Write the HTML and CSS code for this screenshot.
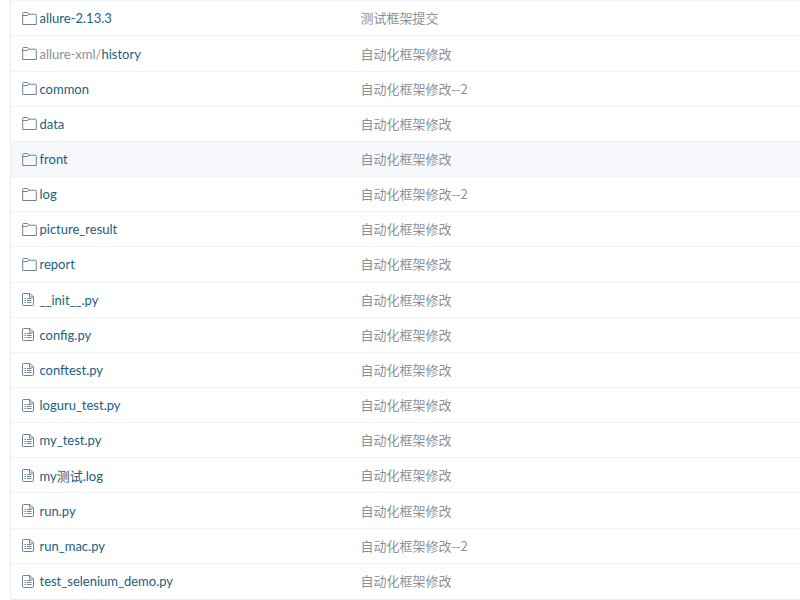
FILE: index.html
```html
<!DOCTYPE html>
<html lang="zh">
<head>
<meta charset="utf-8">
<title>Files</title>
<link rel="stylesheet" href="styles.css">
</head>
<body>
<svg class="defs" width="0" height="0" aria-hidden="true">
  <symbol id="folder" viewBox="0 0 15 13">
    <path d="M.7 12.500V1.300q0-.8.8-.8h3.700l1.800 1.700h6.300q1 0 1 1v9.300z" fill="none" stroke="#6f8296"/>
    <path d="M.7 3.500h4.800l1.500-1.300" fill="none" stroke="#6f8296"/>
  </symbol>
  <symbol id="file" viewBox="0 0 12 13">
    <path d="M1.300.5h6.400l3.800 3.300v7.900q0 .8-.8.8H1.300q-.8 0-.8-.8V1.300q0-.8.8-.8z" fill="none" stroke="#6f8296"/>
    <path d="M7.500.5v3.500h4M2.500 5.500h1.500M2.500 7.500h1.500M2.500 9.500h1.500M5 5.500h4.500M5 7.500h4.500M5 9.500h4.500" fill="none" stroke="#6f8296"/>
  </symbol>
</svg>
<main class="list">
  <div class="row"><div class="name"><svg class="ic"><use href="#folder"/></svg><a>allure-2.13.3</a></div><div class="msg">测试框架提交</div></div>
  <div class="row"><div class="name"><svg class="ic"><use href="#folder"/></svg><a><span class="dim">allure-xml/</span>history</a></div><div class="msg">自动化框架修改</div></div>
  <div class="row"><div class="name"><svg class="ic"><use href="#folder"/></svg><a>common</a></div><div class="msg">自动化框架修改--2</div></div>
  <div class="row"><div class="name"><svg class="ic"><use href="#folder"/></svg><a>data</a></div><div class="msg">自动化框架修改</div></div>
  <div class="row hover"><div class="name"><svg class="ic"><use href="#folder"/></svg><a>front</a></div><div class="msg">自动化框架修改</div></div>
  <div class="row"><div class="name"><svg class="ic"><use href="#folder"/></svg><a>log</a></div><div class="msg">自动化框架修改--2</div></div>
  <div class="row"><div class="name"><svg class="ic"><use href="#folder"/></svg><a>picture_result</a></div><div class="msg">自动化框架修改</div></div>
  <div class="row"><div class="name"><svg class="ic"><use href="#folder"/></svg><a>report</a></div><div class="msg">自动化框架修改</div></div>
  <div class="row"><div class="name"><svg class="ic ic-file"><use href="#file"/></svg><a>__init__.py</a></div><div class="msg">自动化框架修改</div></div>
  <div class="row"><div class="name"><svg class="ic ic-file"><use href="#file"/></svg><a>config.py</a></div><div class="msg">自动化框架修改</div></div>
  <div class="row"><div class="name"><svg class="ic ic-file"><use href="#file"/></svg><a>conftest.py</a></div><div class="msg">自动化框架修改</div></div>
  <div class="row"><div class="name"><svg class="ic ic-file"><use href="#file"/></svg><a>loguru_test.py</a></div><div class="msg">自动化框架修改</div></div>
  <div class="row"><div class="name"><svg class="ic ic-file"><use href="#file"/></svg><a>my_test.py</a></div><div class="msg">自动化框架修改</div></div>
  <div class="row"><div class="name"><svg class="ic ic-file"><use href="#file"/></svg><a>my测试.log</a></div><div class="msg">自动化框架修改</div></div>
  <div class="row"><div class="name"><svg class="ic ic-file"><use href="#file"/></svg><a>run.py</a></div><div class="msg">自动化框架修改</div></div>
  <div class="row"><div class="name"><svg class="ic ic-file"><use href="#file"/></svg><a>run_mac.py</a></div><div class="msg">自动化框架修改--2</div></div>
  <div class="row"><div class="name"><svg class="ic ic-file"><use href="#file"/></svg><a>test_selenium_demo.py</a></div><div class="msg">自动化框架修改</div></div>
</main>
</body>
</html>
```
FILE: styles.css
```css
html, body { margin: 0; padding: 0; background: #fff; }
body {
  height: 600px;
  overflow: hidden;
  font-family: "Noto Sans CJK SC", sans-serif;
  font-size: 13px;
}
.defs { position: absolute; }
.list {
  margin-left: 10px;
  padding-top: 0.3px;
  border-left: 1px solid #e8ecf1;
  border-bottom: 1px solid #e8ecf1;
  border-top: 1px solid #f0f3f7;
  border-bottom-left-radius: 3px;
}
.row {
  display: flex;
  align-items: center;
  height: 35.17px;
  box-sizing: border-box;
  border-bottom: 1px solid #eff2f6;
}
.row:last-child { border-bottom: 0; }
.hover { background: #f6f8fb; }
.name {
  width: 349.5px;
  display: flex;
  align-items: center;
  padding-left: 10.5px;
  box-sizing: border-box;
  gap: 3px;
}
.ic { width: 15px; height: 13px; flex: none; }
.ic-file { width: 12px; height: 13px; margin-right: 3px; }
.name a { color: #20607f; font-family: "Lato", "Noto Sans CJK SC", sans-serif; }
.dim { color: #8a8f96; }
.msg { color: #8c9097; padding-bottom: 1px; }
```
